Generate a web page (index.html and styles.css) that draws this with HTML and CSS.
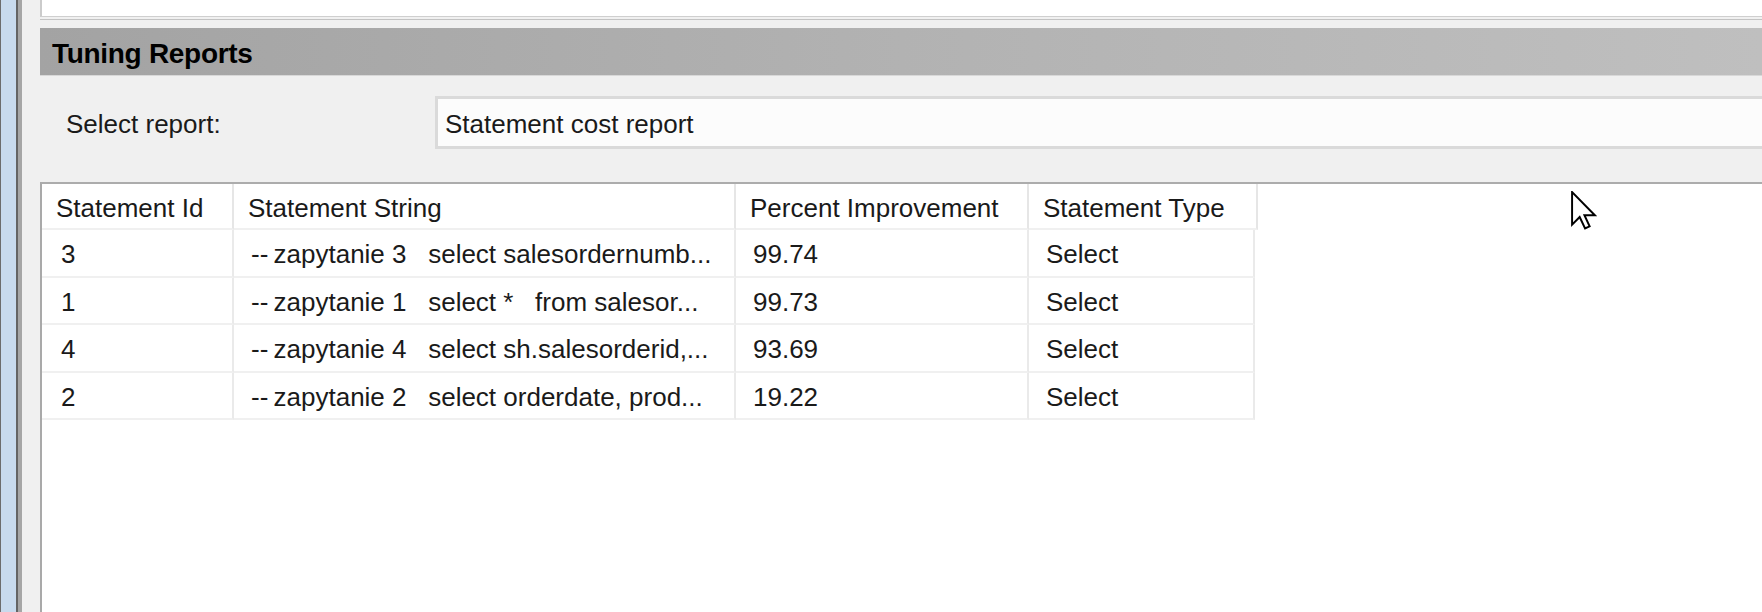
FILE: index.html
```html
<!DOCTYPE html>
<html>
<head>
<meta charset="utf-8">
<link rel="stylesheet" href="styles.css">
</head>
<body>
<div class="edge"></div>
<div class="edge-shade"></div>
<div class="main">
  <div class="top-pane"></div>
  <div class="splitter"></div>
  <div class="section-header">Tuning Reports</div>
  <div class="report-row">
    <div class="label">Select report:</div>
    <div class="combo">Statement cost report</div>
  </div>
  <div class="list">
    <div class="row head">
      <div class="cell">Statement Id</div>
      <div class="cell">Statement String</div>
      <div class="cell">Percent Improvement</div>
      <div class="cell">Statement Type</div>
    </div>
    <div class="row">
      <div class="cell id">3</div>
      <div class="cell">--&thinsp;zapytanie 3 &nbsp; select salesordernumb...</div>
      <div class="cell">99.74</div>
      <div class="cell">Select</div>
    </div>
    <div class="row">
      <div class="cell id">1</div>
      <div class="cell">--&thinsp;zapytanie 1 &nbsp; select * &nbsp; from salesor...</div>
      <div class="cell">99.73</div>
      <div class="cell">Select</div>
    </div>
    <div class="row">
      <div class="cell id">4</div>
      <div class="cell">--&thinsp;zapytanie 4 &nbsp; select sh.salesorderid,...</div>
      <div class="cell">93.69</div>
      <div class="cell">Select</div>
    </div>
    <div class="row">
      <div class="cell id">2</div>
      <div class="cell">--&thinsp;zapytanie 2 &nbsp; select orderdate, prod...</div>
      <div class="cell">19.22</div>
      <div class="cell">Select</div>
    </div>
    <svg class="cursor" width="26" height="39" viewBox="0 0 12 18" xmlns="http://www.w3.org/2000/svg">
      <path d="M0.5 0.5 L0.5 15.5 L4 12 L6.5 17.3 L8.6 16.3 L6.2 11.2 L11 11.2 Z" fill="#ffffff" stroke="#000000" stroke-width="0.9" stroke-linejoin="miter"/>
    </svg>
  </div>
</div>
</body>
</html>
```
FILE: styles.css
```css
html, body {
  margin: 0;
  padding: 0;
}
body {
  width: 1762px;
  height: 612px;
  overflow: hidden;
  display: flex;
  background: #f0f0f0;
  font-family: "Liberation Sans", Arial, sans-serif;
  font-size: 26px;
  color: #1a1a1a;
}
.edge {
  flex: none;
  width: 15px;
  background: #c8daed;
  border-left: 1px solid #6c6c6c;
  border-right: 2px solid #646464;
}
.edge-shade {
  flex: none;
  width: 4px;
  background: #a6a6a6;
}
.main {
  flex: 1;
  min-width: 0;
  display: flex;
  flex-direction: column;
  padding-left: 18px;
}
.top-pane {
  flex: none;
  height: 16px;
  background: #ffffff;
  border-left: 2px solid #cbcbcb;
  border-bottom: 1px solid #cfcfcf;
}
.splitter {
  flex: none;
  height: 1px;
  margin-top: 2px;
  background: #c3c3c3;
}
.section-header {
  flex: none;
  margin-top: 8px;
  height: 48px;
  box-sizing: border-box;
  display: flex;
  align-items: center;
  padding-left: 12px;
  padding-top: 4px;
  background: linear-gradient(to right, #a3a3a3, #b2b2b2 50%, #bfbfbf);
  border-bottom: 1px solid #d8d8d8;
  font-weight: bold;
  font-size: 28px;
  letter-spacing: -0.3px;
  color: #000000;
}
.report-row {
  flex: none;
  display: flex;
  align-items: center;
  margin-top: 20px;
  height: 53px;
  margin-bottom: 33px;
}
.label {
  flex: none;
  width: 395px;
  box-sizing: border-box;
  padding-left: 26px;
  padding-top: 4px;
}
.combo {
  flex: 1;
  height: 53px;
  box-sizing: border-box;
  margin-right: -20px;
  display: flex;
  align-items: center;
  padding-left: 7px;
  padding-top: 4px;
  background: #fcfcfc;
  border: 3px solid #dadada;
}
.list {
  flex: 1;
  position: relative;
  background: #ffffff;
  border-top: 2px solid #acacac;
  border-left: 2px solid #a9a9a9;
}
.row {
  display: grid;
  grid-template-columns: 192px 502px 293px 226px;
  height: 47.5px;
  box-sizing: border-box;
}
.row.head {
  grid-template-columns: 192px 502px 293px 229px;
  height: 46px;
}
.cell {
  display: flex;
  align-items: center;
  box-sizing: border-box;
  padding-left: 17px;
  padding-top: 4px;
  border-right: 2px solid #eaeaea;
  border-bottom: 2px solid #f0f0f0;
  white-space: pre;
  overflow: hidden;
}
.row.head .cell {
  padding-left: 14px;
  border-right-color: #e6e6e6;
}
.cell.id {
  padding-left: 19px;
}
.cursor {
  position: absolute;
  left: 1529px;
  top: 7px;
}
```
